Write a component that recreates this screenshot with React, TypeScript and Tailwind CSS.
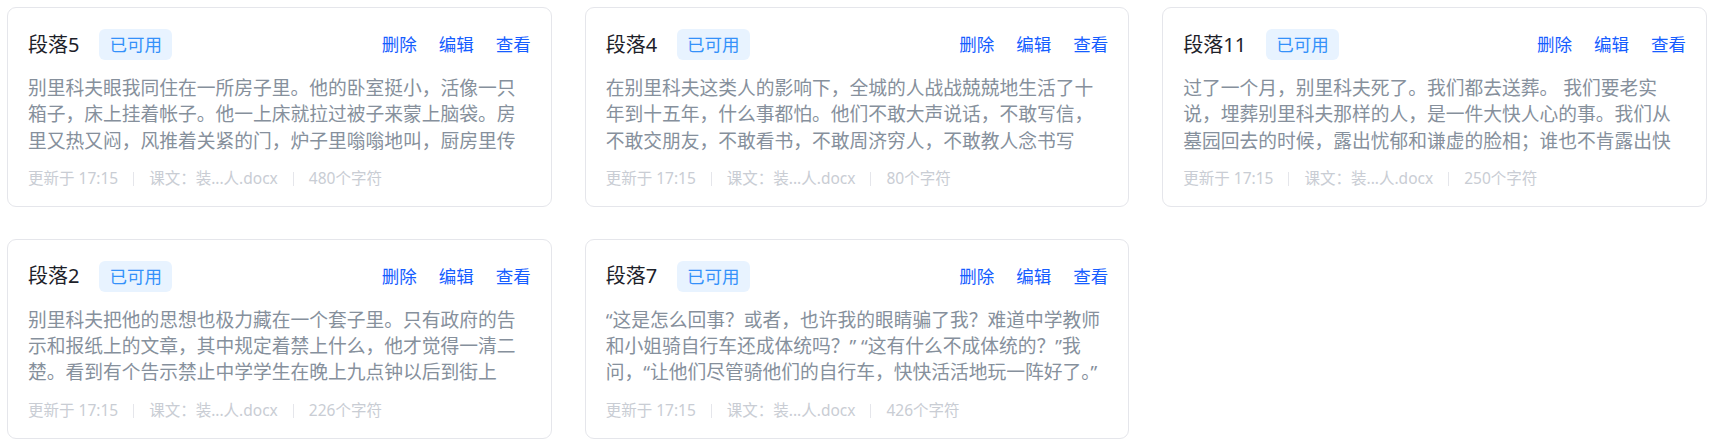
const items = [
  {
    title: '段落5',
    body: '别里科夫眼我同住在一所房子里。他的卧室挺小，活像一只箱子，床上挂着帐子。他一上床就拉过被子来蒙上脑袋。房里又热又闷，风推着关紧的门，炉子里嗡嗡地叫，厨房里传来叹息声——不祥的叹息声……',
    count: 480,
  },
  {
    title: '段落4',
    body: '在别里科夫这类人的影响下，全城的人战战兢兢地生活了十年到十五年，什么事都怕。他们不敢大声说话，不敢写信，不敢交朋友，不敢看书，不敢周济穷人，不敢教人念书写字……',
    count: 80,
  },
  {
    title: '段落11',
    body: '过了一个月，别里科夫死了。我们都去送葬。 我们要老实说，埋葬别里科夫那样的人，是一件大快人心的事。我们从墓园回去的时候，露出忧郁和谦虚的脸相；谁也不肯露出快活的感情。',
    count: 250,
  },
  {
    title: '段落2',
    body: '别里科夫把他的思想也极力藏在一个套子里。只有政府的告示和报纸上的文章，其中规定着禁上什么，他才觉得一清二楚。看到有个告示禁止中学学生在晚上九点钟以后到街上去，他就觉得清楚明白。',
    count: 226,
  },
  {
    title: '段落7',
    body: '“这是怎么回事？或者，也许我的眼睛骗了我？难道中学教师和小姐骑自行车还成体统吗？” “这有什么不成体统的？”我问，“让他们尽管骑他们的自行车，快快活活地玩一阵好了。”',
    count: 426,
  },
];

function Card({ title, body, count }: { title: string; body: string; count: number }) {
  return (
    <div className="bg-white border border-[#e5e6eb] rounded-[9px] px-5 pt-[21px] pb-4">
      {/* header */}
      <div className="flex items-center justify-between h-[31px]">
        <div className="flex items-center">
          <span className="text-[20px] leading-[28px] text-[#1d2129]">{title}</span>
          <span className="ml-5 h-[31px] px-2.5 rounded-[6px] bg-[#e8f3ff] text-[#3491fa] text-[17.5px] leading-[31px]">
            已可用
          </span>
        </div>
        <div className="flex items-center gap-[22px] text-[17.5px] text-[#165dff]">
          <button className="cursor-pointer">删除</button>
          <button className="cursor-pointer">编辑</button>
          <button className="cursor-pointer">查看</button>
        </div>
      </div>

      {/* body, cut at three lines */}
      <p className="mt-[15px] h-[78.75px] overflow-hidden text-[18.75px] leading-[26.25px] text-[#86909c]">
        {body}
      </p>

      {/* footer */}
      <div className="mt-[14px] flex items-center h-[22px] text-[15.5px] text-[#c9cdd4]">
        <span>更新于 17:15</span>
        <span className="mx-[15px] w-px h-3.5 bg-[#e5e6eb]" />
        <span>课文：装...人.docx</span>
        <span className="mx-[15px] w-px h-3.5 bg-[#e5e6eb]" />
        <span>{count}个字符</span>
      </div>
    </div>
  );
}

export default function App() {
  return (
    <div
      className="w-[1714px] h-[446px] bg-white p-[7px] grid grid-cols-3 gap-x-[33px] gap-y-8 content-start"
      style={{ fontFamily: '"Noto Sans", "Noto Sans CJK SC", sans-serif' }}
    >
      {items.map((it) => (
        <Card key={it.title} {...it} />
      ))}
    </div>
  );
}
